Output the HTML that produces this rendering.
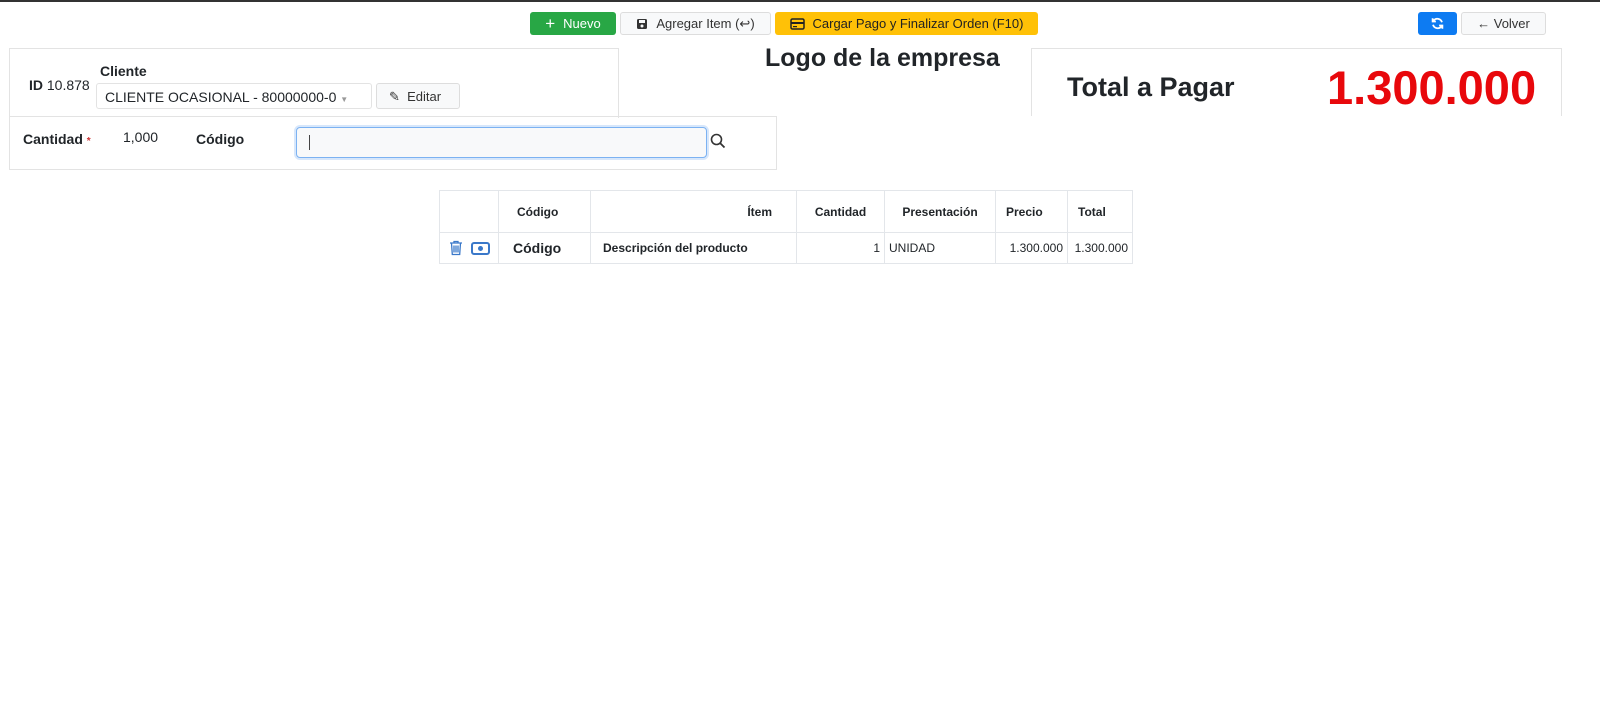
<!DOCTYPE html>
<html><head><meta charset="utf-8"><style>
*{box-sizing:border-box;margin:0;padding:0}
body{width:1600px;height:715px;background:#fff;font-family:"Liberation Sans",sans-serif;color:#212529;position:relative;overflow:hidden}
.a{position:absolute}
.btn{position:absolute;height:23px;border-radius:3px;font-size:13px;display:flex;align-items:center;justify-content:center;gap:8px}
.box{position:absolute;border:1px solid #e3e3e3}
table{border-collapse:collapse;font-size:12px}
td,th{border:1px solid #e3e6ea;padding:0 4px}
th{height:42px;font-weight:bold;font-size:12px}
td{height:31px}
</style></head><body>
<div class="a" style="left:0;top:0;width:1600px;height:2px;background:#333"></div>
<div class="btn" style="left:530px;top:12px;width:86px;background:#28a745;color:#fff"><span style="font-size:17px">+</span>Nuevo</div>
<div class="btn" style="left:620px;top:12px;width:151px;background:#f8f9fa;border:1px solid #ddd;color:#333"><svg width="12" height="12" viewBox="0 0 12 12"><rect x="1" y="1" width="10" height="10" rx="1.5" fill="#333"/><rect x="3" y="2" width="6" height="3" fill="#f8f9fa"/><circle cx="6" cy="8" r="1.5" fill="#f8f9fa"/></svg>Agregar Item (↩)</div>
<div class="btn" style="left:775px;top:12px;width:263px;background:#ffc107;color:#222"><svg width="15" height="12" viewBox="0 0 15 12"><rect x="1" y="1" width="13" height="10" rx="1.5" fill="none" stroke="#222" stroke-width="1.5"/><rect x="1" y="4" width="13" height="2" fill="#222"/><rect x="3" y="8" width="4" height="1.2" fill="#222"/></svg>Cargar Pago y Finalizar Orden (F10)</div>
<div class="btn" style="left:1418px;top:12px;width:39px;background:#0d7bf2;color:#fff"><svg width="13" height="13" viewBox="0 0 16 16" fill="none" stroke="#fff" stroke-width="2.2"><path d="M13.5 6.5A6 6 0 0 0 3 4.5"/><path d="M2.5 9.5A6 6 0 0 0 13 11.5"/><path d="M2 1.5v4h4" fill="none"/><path d="M14 14.5v-4h-4"/></svg></div>
<div class="btn" style="left:1461px;top:12px;width:85px;background:#f8f9fa;border:1px solid #ddd;color:#333">← Volver</div>

<div class="box" style="left:9px;top:48px;width:610px;height:70px;border-bottom:none"></div>
<div class="a" style="left:29px;top:77px;font-size:14px"><b>ID</b> 10.878</div>
<div class="a" style="left:100px;top:63px;font-size:14px;font-weight:bold">Cliente</div>
<div class="a" style="left:96px;top:83px;width:276px;height:26px;border:1px solid #e3e3e3;border-radius:3px;font-size:14px;padding:5px 8px">CLIENTE OCASIONAL - 80000000-0 <span style="font-size:8px;color:#999">▼</span></div>
<div class="a" style="left:376px;top:83px;width:84px;height:26px;border:1px solid #ddd;border-radius:3px;background:#f8f9fa;font-size:13px;padding:5px 12px;color:#333">✎&nbsp; Editar</div>

<div class="box" style="left:9px;top:116px;width:768px;height:54px"></div>
<div class="a" style="left:23px;top:131px;font-size:14px;font-weight:bold">Cantidad <span style="color:#c33;font-size:10px">*</span></div>
<div class="a" style="left:123px;top:129px;font-size:14px">1,000</div>
<div class="a" style="left:196px;top:131px;font-size:14px;font-weight:bold">Código</div>
<div class="a" style="left:296px;top:127px;width:411px;height:31px;border:1px solid #7cb2f2;border-radius:4px;background:#f8f9fa;box-shadow:0 0 0 2px #d7e7fb"><div style="position:absolute;left:12px;top:7px;width:1px;height:15px;background:#444"></div></div>
<svg class="a" style="left:710px;top:133px" width="16" height="16" viewBox="0 0 16 16"><circle cx="6.5" cy="6.5" r="5" fill="none" stroke="#333" stroke-width="1.6"/><line x1="10" y1="10" x2="14.5" y2="14.5" stroke="#333" stroke-width="1.8"/></svg>

<div class="a" style="left:765px;top:44px;font-size:25px;font-weight:bold">Logo de la empresa</div>
<div class="box" style="left:1031px;top:48px;width:531px;height:68px;border-bottom:none"></div>
<div class="a" style="left:1067px;top:72px;font-size:27px;font-weight:bold">Total a Pagar</div>
<div class="a" style="left:1327px;top:60px;font-size:47px;font-weight:bold;color:#e8080c">1.300.000</div>

<table class="a" style="left:439px;top:190px">
<tr><th style="width:59px"></th><th style="width:92px;text-align:left;padding-left:18px">Código</th><th style="width:206px;text-align:right;padding-right:24px">Ítem</th><th style="width:88px">Cantidad</th><th style="width:111px">Presentación</th><th style="width:72px;text-align:left;padding-left:10px">Precio</th><th style="width:65px;text-align:left;padding-left:10px">Total</th></tr>
<tr><td><svg width="14" height="16" viewBox="0 0 14 16" style="vertical-align:middle;margin-left:5px" fill="none" stroke="#3a78c9" stroke-width="1.3"><path d="M1 3h12M5 3V1.5h4V3M2.5 3l.8 11.5h7.4L11.5 3M5 5.5v7M7 5.5v7M9 5.5v7"/></svg><svg width="19" height="13" viewBox="0 0 19 13" style="vertical-align:middle;margin-left:8px"><rect x="1" y="1" width="17" height="11" rx="2" fill="none" stroke="#3a78c9" stroke-width="2"/><circle cx="9.5" cy="6.5" r="2.5" fill="#3a78c9"/></svg></td><td style="font-size:14px;font-weight:bold;padding-left:14px">Código</td><td style="font-size:12px;font-weight:bold;padding-left:12px">Descripción del producto</td><td style="text-align:right">1</td><td>UNIDAD</td><td style="text-align:right">1.300.000</td><td style="text-align:right">1.300.000</td></tr>
</table>
</body></html>
